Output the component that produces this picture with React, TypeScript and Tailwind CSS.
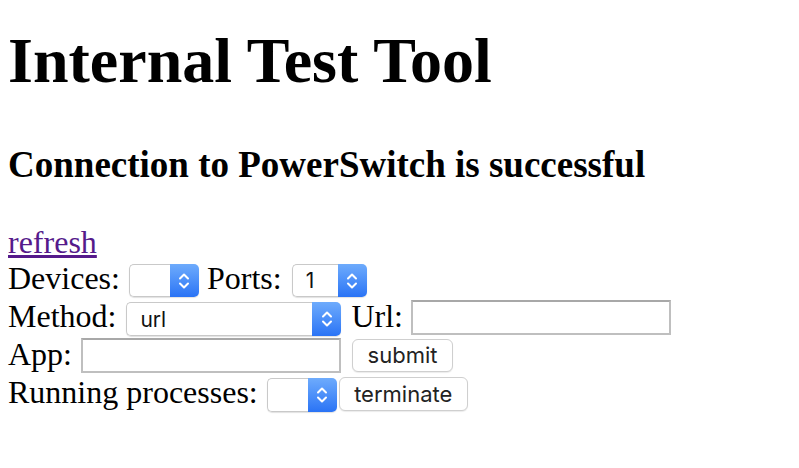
import React from 'react';

const Chevron = () => (
  <svg width="12" height="18" viewBox="0 0 12 18" fill="none" stroke="white" strokeWidth="2" strokeLinecap="round" strokeLinejoin="round">
    <path d="M2 6.5 6 2.5 10 6.5" />
    <path d="M2 11.5 6 15.5 10 11.5" />
  </svg>
);

function Select({ value = '', className = '' }: { value?: string; className?: string }) {
  return (
    <div className={`flex h-[33px] shrink-0 rounded-[5px] shadow-[0_1px_1px_rgba(0,0,0,0.12)] ${className}`}>
      <div className="flex-1 flex items-center pl-[13px] rounded-l-[5px] border border-r-0 border-[#c9c9c9] bg-white font-['Inter',sans-serif] text-[21px] text-[#111]">
        {value}
      </div>
      <div className="w-[29px] flex items-center justify-center rounded-r-[5px] bg-linear-to-b from-[#6eabfc] to-[#2a73f5]">
        <Chevron />
      </div>
    </div>
  );
}

function Button({ label, className = '' }: { label: string; className?: string }) {
  return (
    <button className={`flex shrink-0 items-center justify-center rounded-[6px] border border-[#cfcfcf] bg-white shadow-[0_1px_1px_rgba(0,0,0,0.08)] font-['Inter',sans-serif] text-[22px] text-[#222] ${className}`}>
      {label}
    </button>
  );
}

function TextInput({ className = '' }: { className?: string }) {
  return <input type="text" className={`h-[35px] w-[260px] shrink-0 border-2 border-[#bfbfbf] border-t-[#a8a8a8] bg-white outline-none ${className}`} />;
}

export default function App() {
  return (
    <div className="min-h-screen bg-white px-2 text-black font-['Liberation_Serif',serif]">
      <h1 className="pt-[25px] text-[64px] font-bold leading-[72px] whitespace-nowrap">Internal Test Tool</h1>
      <h3 className="mt-[46px] text-[37px] font-bold leading-[43px] whitespace-nowrap">Connection to PowerSwitch is successful</h3>

      <div className="mt-[38px] text-[32px] leading-[37px]">
        <div className="h-[36px]">
          <a href="#" className="text-[#551a8b] underline">refresh</a>
        </div>

        <div className="flex h-[38px] items-start whitespace-nowrap">
          <span>Devices:</span>
          <Select className="ml-[9px] mt-[4px] w-[70px]" />
          <span className="ml-[8px]">Ports:</span>
          <Select className="ml-[10px] mt-[4px] w-[75px]" value="1" />
        </div>

        <div className="flex h-[38px] items-start whitespace-nowrap">
          <span>Method:</span>
          <Select className="ml-[10px] mt-[4px] w-[215px] h-[34px]" value="url" />
          <span className="ml-[10px]">Url:</span>
          <TextInput className="ml-[8px] mt-[2px]" />
        </div>

        <div className="flex h-[38px] items-start whitespace-nowrap">
          <span>App:</span>
          <TextInput className="ml-[9px] mt-[2px]" />
          <Button label="submit" className="ml-[11px] mt-[3px] h-[33px] w-[101px]" />
        </div>

        <div className="flex h-[38px] items-start whitespace-nowrap">
          <span>Running processes:</span>
          <Select className="ml-[9px] mt-[4px] w-[70px] h-[34px]" />
          <Button label="terminate" className="ml-[2px] mt-[3px] h-[34px] w-[129px]" />
        </div>
      </div>
    </div>
  );
}
